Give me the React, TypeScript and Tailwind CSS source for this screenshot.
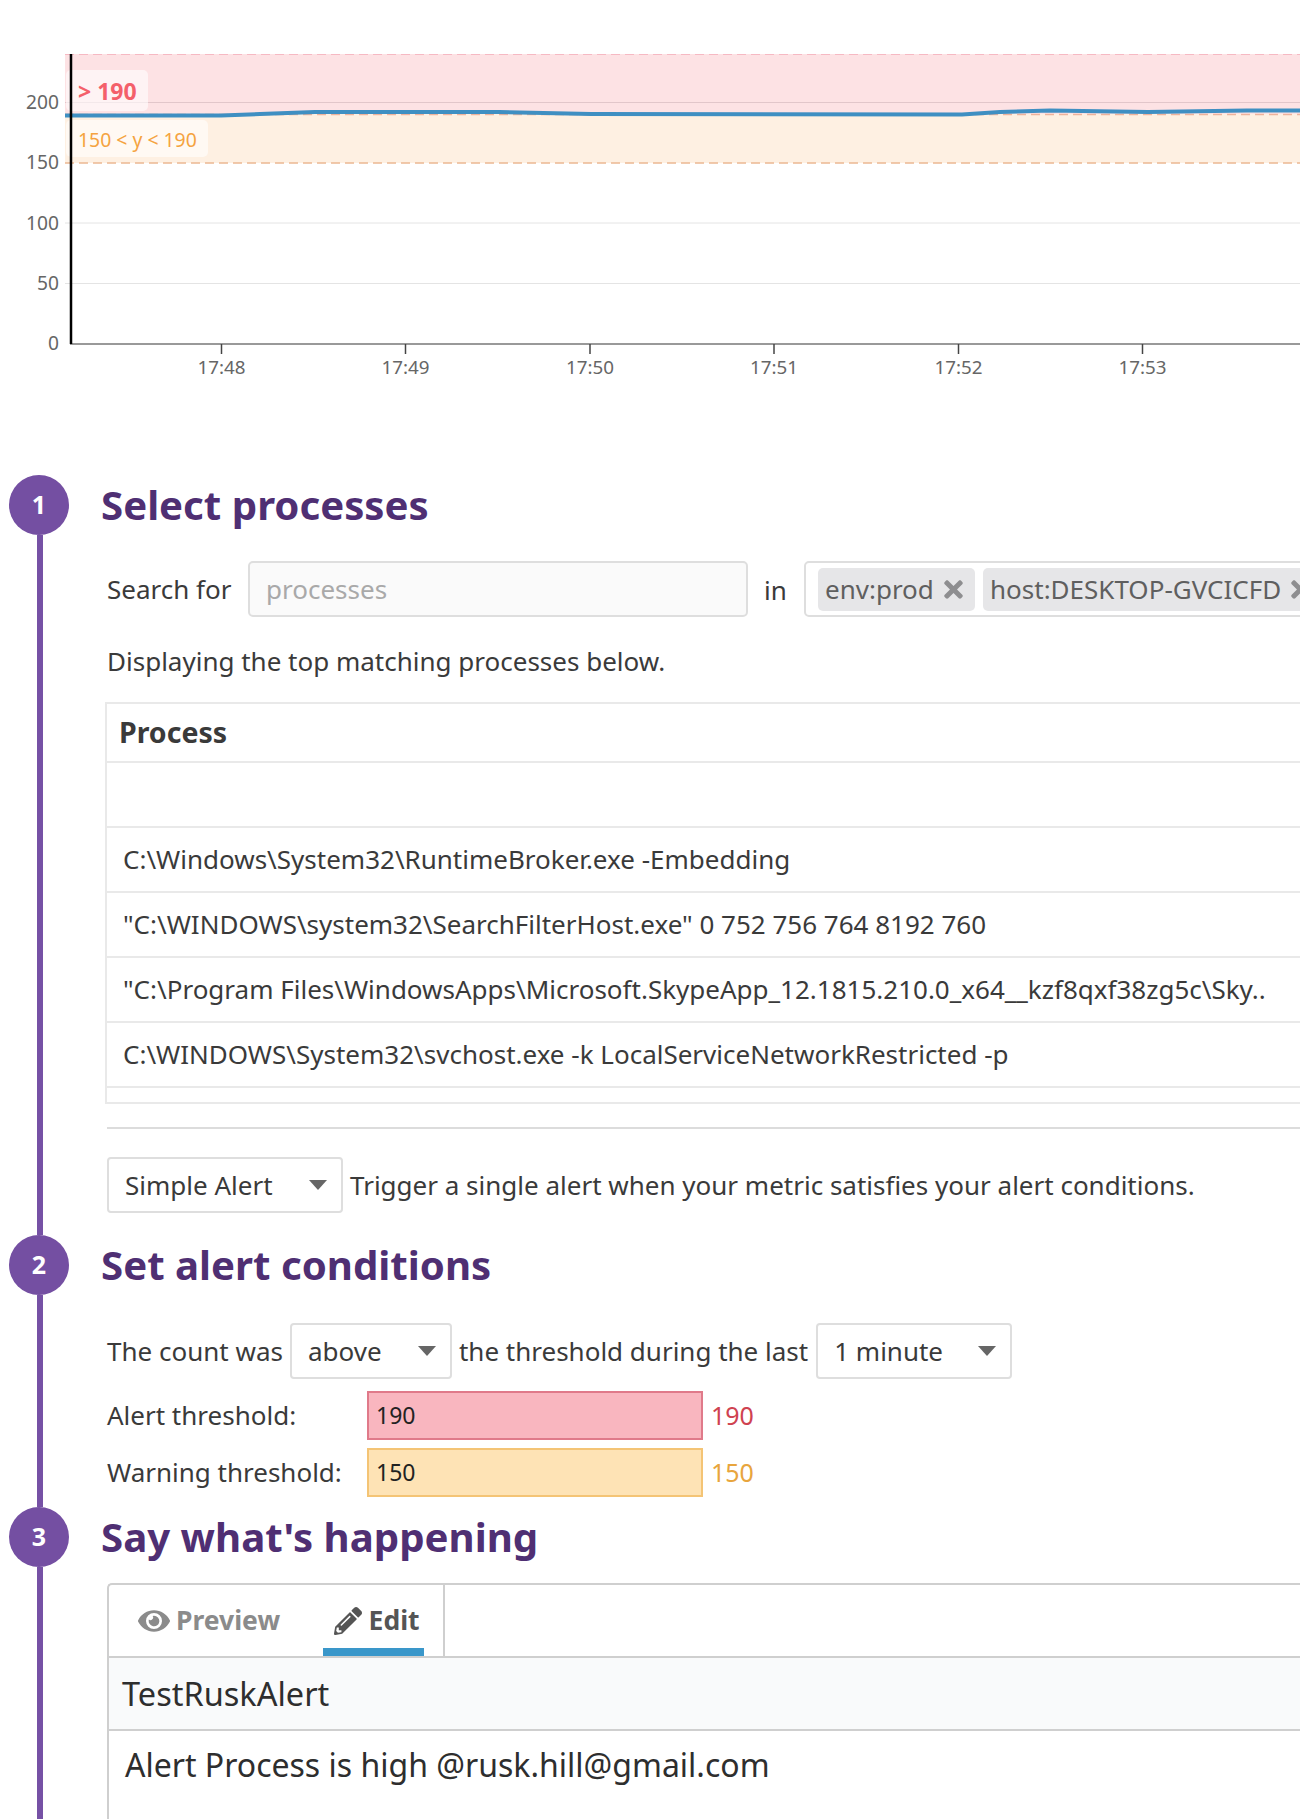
import { FaEye, FaPencilAlt, FaTimes } from 'react-icons/fa';

const yLabels = [
  { y: 102, text: '200' },
  { y: 162, text: '150' },
  { y: 223, text: '100' },
  { y: 283, text: '50' },
  { y: 343, text: '0' },
];

const ticks = [
  { x: 221.5, text: '17:48' },
  { x: 405.5, text: '17:49' },
  { x: 590, text: '17:50' },
  { x: 774, text: '17:51' },
  { x: 958.5, text: '17:52' },
  { x: 1142.5, text: '17:53' },
];

const processes = [
  '',
  'C:\\Windows\\System32\\RuntimeBroker.exe -Embedding',
  '"C:\\WINDOWS\\system32\\SearchFilterHost.exe" 0 752 756 764 8192 760',
  '"C:\\Program Files\\WindowsApps\\Microsoft.SkypeApp_12.1815.210.0_x64__kzf8qxf38zg5c\\Sky..',
  'C:\\WINDOWS\\System32\\svchost.exe -k LocalServiceNetworkRestricted -p',
];

function Chart() {
  return (
    <svg width="1300" height="400" viewBox="0 0 1300 400" className="block">
      {/* threshold bands */}
      <rect x="65" y="54" width="1235" height="60" fill="#fde2e4" />
      <rect x="65" y="114" width="1235" height="49" fill="#fef0e2" />
      <line x1="65" x2="1300" y1="54.5" y2="54.5" stroke="#f6b9c3" strokeDasharray="9 5" />
      <line x1="65" x2="1300" y1="114.5" y2="114.5" stroke="#eeb39c" strokeWidth="1.5" strokeDasharray="9 5" />
      <line x1="65" x2="1300" y1="163" y2="163" stroke="#ecb892" strokeWidth="1.5" strokeDasharray="9 5" />

      {/* grid */}
      <line x1="65" x2="1300" y1="102.5" y2="102.5" stroke="#e2c6ca" />
      <line x1="65" x2="1300" y1="223" y2="223" stroke="#e4e4e4" />
      <line x1="65" x2="1300" y1="283.5" y2="283.5" stroke="#e4e4e4" />

      {/* threshold labels */}
      <rect x="66" y="70" width="82" height="41" rx="5" fill="#ffffff" fillOpacity="0.6" />
      <rect x="66" y="120" width="142" height="37" rx="5" fill="#ffffff" fillOpacity="0.6" />

      <polyline
        points="65,115.5 221,115.5 260,114 315,112 499,112 591,114 962,114.5 1000,112 1050,110.5 1148,112 1247,110.5 1300,110.5"
        fill="none"
        stroke="#3f8fc2"
        strokeWidth="4"
      />

      <text x="78" y="100" fill="#f4606a" fontSize="23" fontWeight="700">&gt; 190</text>
      <text x="78" y="147" fill="#f5a340" fontSize="19.4">150 &lt; y &lt; 190</text>

      {/* axes */}
      <line x1="70" x2="1300" y1="344" y2="344" stroke="#777777" strokeWidth="1.5" />
      <line x1="71" x2="71" y1="54" y2="344" stroke="#000000" strokeWidth="2.5" />

      {yLabels.map((l) => (
        <text key={l.text} x="59" y={l.y + 7} textAnchor="end" fill="#666666" fontSize="19.2">{l.text}</text>
      ))}
      {ticks.map((t) => (
        <g key={t.text}>
          <line x1={t.x} x2={t.x} y1="344" y2="354" stroke="#444444" strokeWidth="1.5" />
          <text x={t.x} y="374" textAnchor="middle" fill="#666666" fontSize="18.8">{t.text}</text>
        </g>
      ))}
    </svg>
  );
}

function Rail({ n }: { n: number }) {
  return (
    <div className="flex w-[60px] shrink-0 flex-col items-center">
      <div className="flex h-[60px] w-[60px] shrink-0 items-center justify-center rounded-full bg-[#744fa2] text-[25px] font-bold text-white">
        {n}
      </div>
      <div className="ml-[2px] w-[6px] flex-1 bg-[#7651a5]" />
    </div>
  );
}

function Heading({ children }: { children: string }) {
  return (
    <h2 className="ml-[-1px] flex h-[60px] items-center text-[40.2px] font-bold text-[#4f2f73]">{children}</h2>
  );
}

function Select({ label, className }: { label: string; className: string }) {
  return (
    <div className={`flex h-[56px] shrink-0 items-center justify-between rounded-[4px] border-2 border-[#dedede] bg-white pl-[16px] pr-[14px] ${className}`}>
      <span className="pt-[1px]">{label}</span>
      <svg width="18" height="10" viewBox="0 0 18 10">
        <polygon points="0,0 18,0 9,10" fill="#666666" />
      </svg>
    </div>
  );
}

export default function App() {
  return (
    <div className="h-[1819px] w-[1300px] overflow-hidden bg-white font-['Noto_Sans',sans-serif] text-[26px] text-[#3a3a3a]">
      <Chart />
      <div className="mt-[75px] pl-[9px]">
        {/* Select processes */}
        <section className="flex h-[760px] gap-[33px]">
          <Rail n={1} />
          <div className="w-[1300px]">
            <Heading>Select processes</Heading>
            <div className="mt-[26px] flex h-[56px] items-center pl-[5px]">
              <span className="w-[141px] shrink-0 pt-[1px]">Search for</span>
              <div className="flex h-[56px] w-[500px] shrink-0 items-center rounded-[5px] border-2 border-[#dedede] bg-[#fafafa] pl-[16px] pt-[1px] text-[#a9a9a9]">
                processes
              </div>
              <span className="ml-[16px] w-[40px] shrink-0 pt-[2px]">in</span>
              <div className="flex h-[56px] w-[800px] shrink-0 items-center gap-[8px] rounded-[5px] border-2 border-[#dedede] pl-[12px]">
                <div className="flex h-[43px] w-[157px] shrink-0 items-center gap-[6px] rounded-[5px] bg-[#e6e6e8] pl-[7px] pt-[1px] text-[#5f5f5f]">
                  env:prod
                  <FaTimes className="text-[27px] text-[#8e8e90]" />
                </div>
                <div className="flex h-[43px] shrink-0 items-center gap-[6px] rounded-[5px] bg-[#e6e6e8] pl-[7px] pr-[8px] pt-[1px] text-[#5f5f5f]">
                  host:DESKTOP-GVCICFD
                  <FaTimes className="text-[27px] text-[#8e8e90]" />
                </div>
              </div>
            </div>
            <p className="mt-[26px] h-[36px] pl-[5px] leading-[36px]">Displaying the top matching processes below.</p>
            <div className="mt-[23px] ml-[3px] h-[402px] border-2 border-r-0 border-[#e9e9e9]">
              <div className="flex h-[59px] items-center border-b-2 border-[#e9e9e9] pl-[12px] text-[28.5px] font-bold">Process</div>
              {processes.map((p, i) => (
                <div key={i} className="flex h-[65px] items-center border-b-2 border-[#e9e9e9] pl-[16px] whitespace-nowrap">
                  {p}
                </div>
              ))}
            </div>
            <div className="mt-[23px] ml-[5px] h-[2px] bg-[#dcdcdc]" />
            <div className="mt-[28px] flex items-center pl-[5px]">
              <Select label="Simple Alert" className="w-[236px]" />
              <span className="ml-[7px] whitespace-nowrap pt-[1px]">Trigger a single alert when your metric satisfies your alert conditions.</span>
            </div>
          </div>
        </section>

        {/* Set alert conditions */}
        <section className="flex h-[272px] gap-[33px]">
          <Rail n={2} />
          <div className="w-[1300px]">
            <Heading>Set alert conditions</Heading>
            <div className="mt-[28px] flex items-center pl-[5px]">
              <span className="pt-[1px]">The count was</span>
              <Select label="above" className="ml-[7px] w-[162px]" />
              <span className="ml-[7px] pt-[1px]">the threshold during the last</span>
              <Select label="1 minute" className="ml-[8px] w-[196px]" />
            </div>
            <div className="mt-[12px] flex items-center pl-[5px]">
              <span className="w-[260px] shrink-0">Alert threshold:</span>
              <div className="flex h-[49px] w-[336px] items-center border-2 border-[#e07a8a] bg-[#f9b6bf] pl-[7px] text-[23px] text-[#222222]">190</div>
              <span className="ml-[8px] text-[25px] text-[#cf4250]">190</span>
            </div>
            <div className="mt-[8px] flex items-center pl-[5px]">
              <span className="w-[260px] shrink-0">Warning threshold:</span>
              <div className="flex h-[49px] w-[336px] items-center border-2 border-[#f4c475] bg-[#fee3b5] pl-[7px] text-[23px] text-[#222222]">150</div>
              <span className="ml-[8px] text-[25px] text-[#e8a53d]">150</span>
            </div>
          </div>
        </section>

        {/* Say what's happening */}
        <section className="flex h-[400px] gap-[33px]">
          <Rail n={3} />
          <div className="w-[1300px]">
            <Heading>Say what's happening</Heading>
            <div className="mt-[16px] ml-[5px] rounded-tl-[5px] border-2 border-r-0 border-[#cfcfcf]">
              <div className="flex h-[73px] border-b-2 border-[#cfcfcf]">
                <div className="flex w-[336px] border-r-2 border-[#cfcfcf]">
                  <div className="flex items-center gap-[6px] pl-[29px] text-[26.5px] font-bold text-[#8b8b8b]">
                    <FaEye className="text-[32px]" />
                    Preview
                  </div>
                  <div className="ml-[43px] flex h-[71px] w-[101px] items-center justify-center gap-[7px] border-b-[8px] border-[#3a97ca] pl-[6px] pt-[8px] text-[26.5px] font-bold text-[#555555]">
                    <FaPencilAlt className="text-[28px]" />
                    Edit
                  </div>
                </div>
              </div>
              <div className="flex h-[73px] items-center border-b-2 border-[#cfcfcf] bg-[#f9fafb] pl-[13px] pt-[2px] text-[32.5px] text-[#2e2e2e]">
                TestRuskAlert
              </div>
              <div className="h-[200px] pl-[16px] pt-[10px] text-[32px] text-[#2e2e2e]">
                Alert Process is high @rusk.hill@gmail.com
              </div>
            </div>
          </div>
        </section>
      </div>
    </div>
  );
}
